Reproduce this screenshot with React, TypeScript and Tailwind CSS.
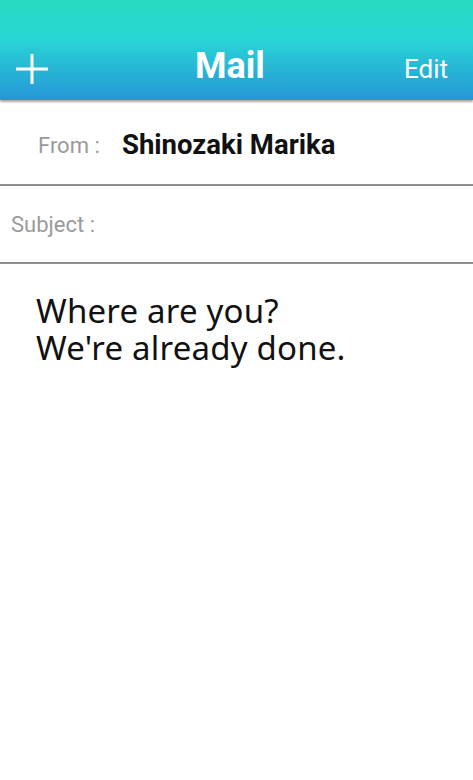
export default function App() {
  return (
    <main className="h-[780px] w-[473px] bg-white flex flex-col overflow-hidden">
      {/* header */}
      <div className="relative h-[100px] shrink-0 bg-[linear-gradient(to_bottom,#28d9bf_0%,#29d6d6_38%,#2596d7_100%)] shadow-[0_2px_2px_rgba(0,0,0,0.35)] flex items-end pb-[14px] px-[16px] font-['Roboto',sans-serif] text-white">
        <button className="w-[32px] h-[32px] flex items-center justify-center mb-[1px]">
          <svg width="32" height="30" viewBox="0 0 32 30">
            <path d="M16 0V30M0 15H32" stroke="white" strokeWidth="3" />
          </svg>
        </button>
        <h1 className="flex-1 text-center text-[36px] leading-[40px] font-bold pl-[8px]">Mail</h1>
        <span className="text-[26px] leading-[32px] mr-[9px] mb-[1px]">Edit</span>
      </div>

      {/* from */}
      <div className="h-[86px] shrink-0 flex items-center pl-[38px] pt-[6px] font-['Roboto',sans-serif] border-b-2 border-[#8e8e8e]">
        <span className="text-[22px] text-[#9a9a9a] w-[84px]">From :</span>
        <span className="text-[27.5px] leading-[32px] font-bold text-[#111]">Shinozaki Marika</span>
      </div>

      {/* subject */}
      <div className="h-[78px] shrink-0 flex items-center pl-[11px] font-['Roboto',sans-serif] border-b-2 border-[#8e8e8e]">
        <span className="text-[22px] text-[#9a9a9a]">Subject :</span>
      </div>

      {/* body */}
      <div className="px-[36px] pt-[28px] font-['Noto_Sans',sans-serif] text-[33px] leading-[37px] tracking-[0.2px] text-[#111]">
        <p>Where are you?</p>
        <p>We're already done.</p>
      </div>
    </main>
  );
}
